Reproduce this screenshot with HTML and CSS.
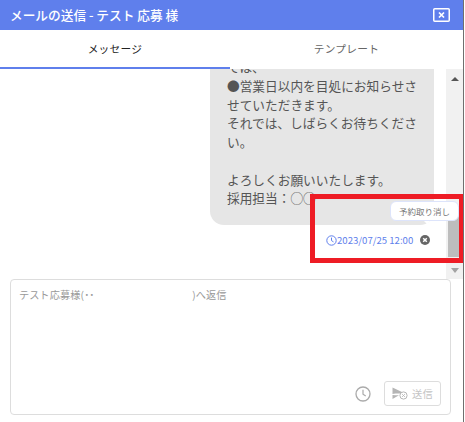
FILE: index.html
```html
<!DOCTYPE html>
<html lang="ja">
<head>
<meta charset="utf-8">
<title>メールの送信</title>
<link rel="stylesheet" href="styles.css">
</head>
<body>
<div class="modal">
  <header class="head">
    <h1 class="title">メールの送信 - テスト 応募 様</h1>
    <button class="close" aria-label="閉じる">
      <svg width="17" height="14" viewBox="0 0 17 14"><rect x="0.75" y="0.75" width="15.5" height="12.5" rx="1" fill="none" stroke="#fff" stroke-width="1.5"/><path d="M6 4.5l5 5M11 4.5l-5 5" stroke="#fff" stroke-width="1.7" fill="none"/></svg>
    </button>
  </header>
  <nav class="tabs">
    <div class="tab active">メッセージ</div>
    <div class="tab">テンプレート</div>
  </nav>
  <section class="chat">
    <div class="messages">
      <div class="bubble">ては、
●営業日以内を目処にお知らせさ
せていただきます。
それでは、しばらくお待ちくださ
い。

よろしくお願いいたします。
採用担当：◯◯</div>
      <div class="meta">
        <svg class="meta-clock" width="11" height="11" viewBox="0 0 11 11"><circle cx="5.5" cy="5.5" r="4.7" fill="none" stroke="#5f7fec" stroke-width="1"/><path d="M5.5 2.6v3l2 1.3" fill="none" stroke="#5f7fec" stroke-width="1"/></svg>
        <span class="date">2023/07/25 12:00</span>
        <svg class="meta-x" width="10" height="10" viewBox="0 0 10 10"><circle cx="5" cy="5" r="5" fill="#666"/><path d="M3.2 3.2l3.6 3.6M6.8 3.2l-3.6 3.6" stroke="#fff" stroke-width="1.5"/></svg>
      </div>
    </div>
    <div class="scrollbar">
      <span class="arrow up"></span>
      <div class="track"><div class="thumb"></div></div>
      <span class="arrow down"></span>
    </div>
    <div class="highlight"></div>
    <div class="tip">予約取り消し</div>
  </section>
  <section class="composer">
    <p class="placeholder"><span>テスト 応募様( ˙˙</span><span class="hole"></span><span>)へ返信</span></p>
    <div class="actions">
      <svg width="16" height="16" viewBox="0 0 16 16"><circle cx="8" cy="8" r="7" fill="none" stroke="#aaa" stroke-width="1.3"/><path d="M8 3.8v4.4l2.7 1.8" fill="none" stroke="#aaa" stroke-width="1.2"/></svg>
      <button class="send">
        <svg width="16" height="13" viewBox="0 0 16 13"><path d="M0.5 0.5L10 5v1.5H3.5L0.5 7zM0.5 12L7 8.2H3.5L0.5 8z" fill="#b5b5b5"/><circle cx="11.5" cy="8.5" r="3.6" fill="#fff" stroke="#b5b5b5"/><path d="M10 7l3 3M13 7l-3 3" stroke="#b5b5b5" stroke-width=".8"/></svg>
        <span>送信</span>
      </button>
    </div>
  </section>
</div>
</body>
</html>
```
FILE: styles.css
```css
* { box-sizing: border-box; }
html, body { margin: 0; padding: 0; background: #fff; }
body { width: 465px; height: 422px; overflow: hidden; font-family: "Noto Sans CJK JP", "Noto Sans", sans-serif; }
.modal { width: 464px; height: 422px; display: flex; flex-direction: column; border-right: 1px solid #6f6f6f; }
.head { height: 30px; flex: none; background: #5f7fec; display: flex; align-items: center; justify-content: space-between; padding: 0 13px 0 10px; }
.title { margin: 0; font-size: 12.7px; font-weight: 500; color: #fff; line-height: 30px; }
.close { width: 17px; height: 14px; padding: 0; border: 0; background: none; display: block; }
.close svg { display: block; }
.tabs { height: 39px; flex: none; display: flex; }
.tab { flex: 0 0 233px; text-align: center; font-size: 10.7px; line-height: 38px; color: #666; letter-spacing: .3px; }
.tab.active { flex: 0 0 230px; color: #222; border-bottom: 2px solid #5f7fec; }
.chat { position: relative; height: 210px; flex: none; display: flex; }
.messages { flex: 1; min-width: 0; overflow: hidden; display: flex; flex-direction: column; justify-content: flex-end; align-items: flex-end; padding-right: 12px; }
.bubble { flex: none; width: 224px; padding: 0 10px 17px 17px; background: #e6e6e6; border-radius: 0 0 14px 14px; color: #555; font-size: 12.7px; line-height: 18.7px; white-space: pre-wrap; }
.meta { flex: none; height: 54px; width: 224px; display: flex; align-items: center; padding: 0 4px 24px 116px; color: #5f7fec; }
.meta-clock { flex: none; }
.date { font-size: 9.6px; white-space: nowrap; margin: 0 7px 0 0; }
.meta-x { flex: none; }
.scrollbar { flex: 0 0 17px; background: #f1f1f1; display: flex; flex-direction: column; align-items: center; }
.track { flex: 1; width: 100%; padding: 125px 4px 11px 2px; display: flex; }
.thumb { flex: 1; background: #bdbdbd; }
.arrow { flex: none; width: 0; height: 0; border-left: 4px solid transparent; border-right: 4px solid transparent; }
.arrow.up { margin-top: 8px; border-bottom: 4px solid #555; }
.arrow.down { margin-bottom: 6px; border-top: 5px solid #a3a3a3; }
.highlight { position: absolute; left: 310px; top: 125px; width: 153px; height: 69px; border: 5px solid #ee1c25; border-right-width: 4px; pointer-events: none; }
.tip { position: absolute; left: 390px; top: 132px; width: 69px; height: 20px; background: #fff; border: 1px solid #dde4fb; border-radius: 6px; font-size: 8.5px; line-height: 18px; text-align: center; color: #777; }
.tip::after { content: ""; position: absolute; left: 33px; bottom: -4px; width: 0; height: 0; border-left: 3px solid transparent; border-right: 3px solid transparent; border-top: 3px solid #fff; }
.composer { flex: none; margin: 0 12px 0 10px; height: 136px; border: 1px solid #ddd; border-radius: 4px; padding: 8px 9px 8px 8px; display: flex; flex-direction: column; justify-content: space-between; }
.placeholder { margin: 0; display: flex; font-size: 10.2px; line-height: 14px; color: #999; word-spacing: -2px; }
.hole { width: 98px; }
.actions { display: flex; align-items: center; justify-content: flex-end; gap: 13px; }
.actions > svg { display: block; }
.send { width: 57px; height: 25px; border: 1px solid #ddd; border-radius: 3px; background: #fff; padding: 0 0 0 7px; display: flex; align-items: center; gap: 4px; font: inherit; font-size: 10.3px; color: #c4c4c4; letter-spacing: .3px; }
```
